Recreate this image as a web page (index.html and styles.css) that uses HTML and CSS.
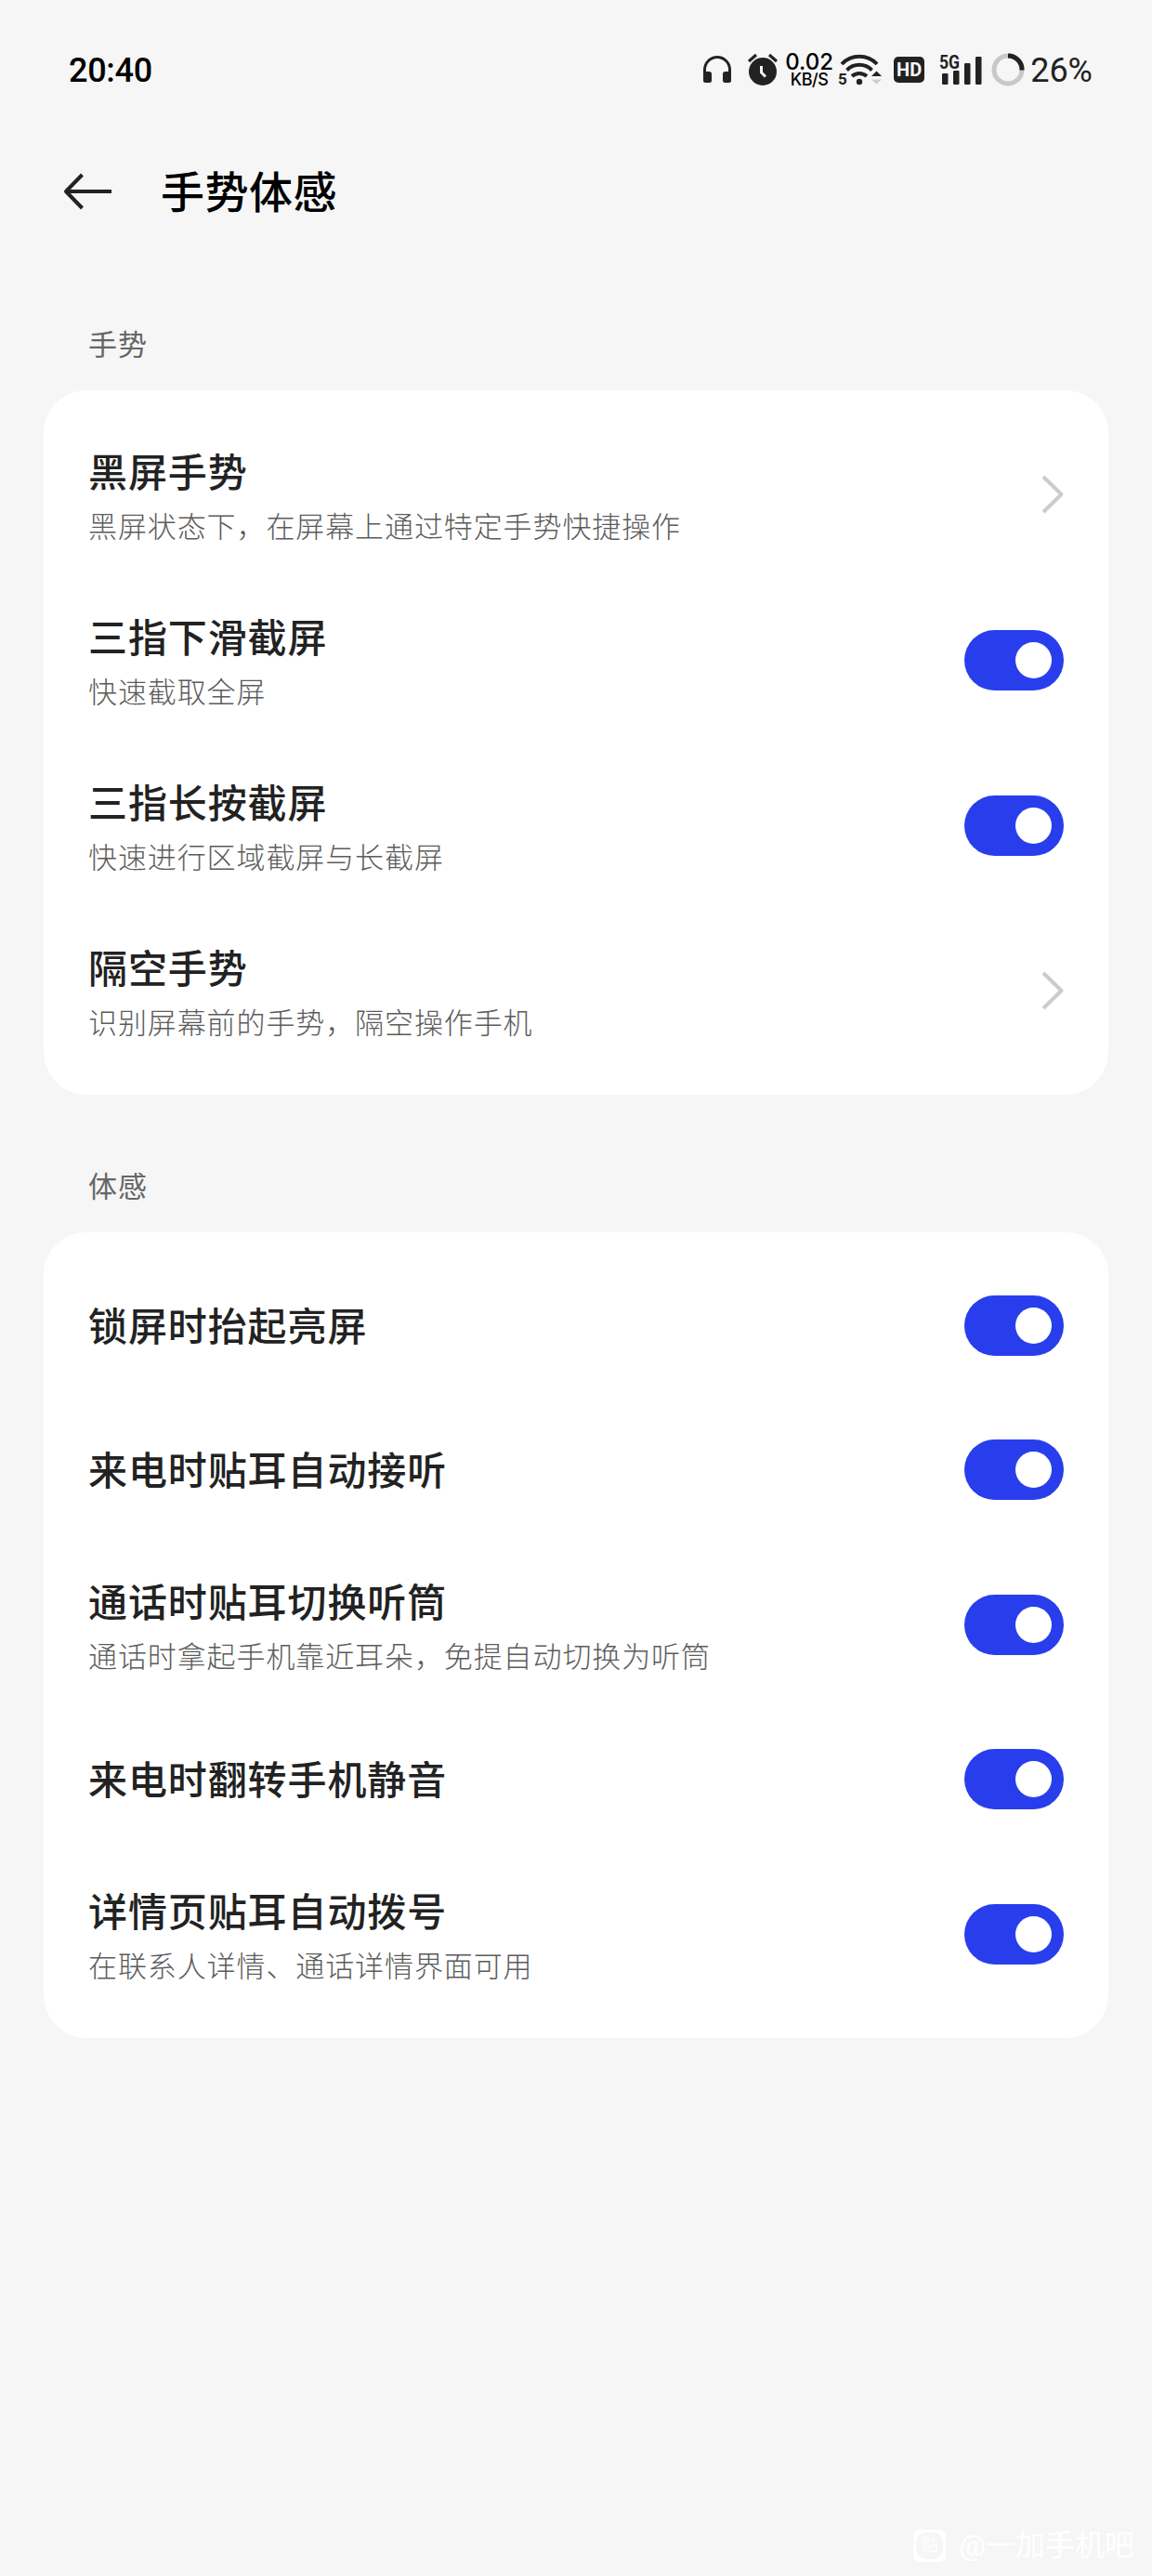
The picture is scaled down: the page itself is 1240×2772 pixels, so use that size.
FILE: index.html
```html
<!DOCTYPE html>
<html lang="zh-CN">
<head>
    <meta charset="UTF-8">
    <meta name="viewport" content="width=device-width, initial-scale=1.0">
    <title>手势体感</title>
    <link rel="stylesheet" href="styles.css">
</head>
<body>

    <!-- Status bar -->
    <div class="status-bar">
        <span class="time">20:40</span>
        <svg class="icon-headphones" width="32" height="30" viewBox="0 0 32 30">
            <path d="M2.5 21V15a13.5 13.5 0 0 1 27 0v6" fill="none" stroke="#222" stroke-width="3"/>
            <rect x="1" y="17" width="9" height="12" rx="2.5" fill="#222"/>
            <rect x="22" y="17" width="9" height="12" rx="2.5" fill="#222"/>
        </svg>
        <svg class="icon-alarm" width="34" height="36" viewBox="0 0 34 36">
            <circle cx="17" cy="20" r="15" fill="#222"/>
            <path d="M2 9l8-7M32 9l-8-7" stroke="#222" stroke-width="3.2"/>
            <path d="M15.500 14v7l4.500 4.500" fill="none" stroke="#f6f6f6" stroke-width="3"/>
        </svg>
        <div class="speed">
            <span class="speed-value">0.02</span>
            <span class="speed-unit">KB/S</span>
        </div>
        <svg class="icon-wifi" width="48" height="38" viewBox="0 0 48 38">
            <path d="M4 13a26 26 0 0 1 38 0M9.500 19.500a19 19 0 0 1 27 0M15 26a12 12 0 0 1 16 0" fill="none" stroke="#222" stroke-width="4"/>
            <circle cx="23" cy="32" r="3.200" fill="#222"/>
            <path d="M36 26l5.500-5.500 5.500 5.500z" fill="#222"/>
            <path d="M36 29.500h11l-5.500 5z" fill="#ccc"/>
            <text x="0" y="35" class="wifi-band">5</text>
        </svg>
        <span class="hd">HD</span>
        <svg class="icon-signal" width="46" height="34" viewBox="0 0 46 34">
            <rect x="3" y="21" width="6.500" height="12" rx="1.200" fill="#222"/>
            <rect x="15" y="18" width="6.500" height="15" rx="1.200" fill="#222"/>
            <rect x="27" y="10" width="6.500" height="23" rx="1.200" fill="#222"/>
            <rect x="39" y="3" width="6.500" height="30" rx="1.200" fill="#222"/>
            <text x="0" y="16" class="net-type" textLength="22" lengthAdjust="spacingAndGlyphs">5G</text>
        </svg>
        <svg class="icon-battery" width="36" height="36" viewBox="0 0 36 36">
            <circle cx="18" cy="18" r="15" fill="none" stroke="#c8c8c8" stroke-width="5"/>
            <path d="M18 3a15 15 0 0 1 15 15.500" fill="none" stroke="#222" stroke-width="5"/>
        </svg>
        <span class="percent">26%</span>
    </div>

    <!-- Page header -->
    <div class="header">
        <svg width="54" height="40" viewBox="0 0 54 40">
            <path d="M21.500 2L4 20l17.500 18M4 20h49" fill="none" stroke="#222" stroke-width="4" stroke-linejoin="round"/>
        </svg>
        <h1>手势体感</h1>
    </div>

    <!-- Gestures -->
    <h2>手势</h2>
    <ul class="card">
        <li>
            <div class="text">
                <p class="title">黑屏手势</p>
                <p class="desc">黑屏状态下，在屏幕上通过特定手势快捷操作</p>
            </div>
            <svg class="arrow" width="24" height="42" viewBox="0 0 24 42"><path d="M2 2l19.500 19L2 40"/></svg>
        </li>
        <li>
            <div class="text">
                <p class="title">三指下滑截屏</p>
                <p class="desc">快速截取全屏</p>
            </div>
            <span class="switch"></span>
        </li>
        <li>
            <div class="text">
                <p class="title">三指长按截屏</p>
                <p class="desc">快速进行区域截屏与长截屏</p>
            </div>
            <span class="switch"></span>
        </li>
        <li>
            <div class="text">
                <p class="title">隔空手势</p>
                <p class="desc">识别屏幕前的手势，隔空操作手机</p>
            </div>
            <svg class="arrow" width="24" height="42" viewBox="0 0 24 42"><path d="M2 2l19.500 19L2 40"/></svg>
        </li>
    </ul>

    <!-- Motion -->
    <h2>体感</h2>
    <ul class="card">
        <li class="single">
            <p class="title">锁屏时抬起亮屏</p>
            <span class="switch"></span>
        </li>
        <li class="single">
            <p class="title">来电时贴耳自动接听</p>
            <span class="switch"></span>
        </li>
        <li>
            <div class="text">
                <p class="title">通话时贴耳切换听筒</p>
                <p class="desc">通话时拿起手机靠近耳朵，免提自动切换为听筒</p>
            </div>
            <span class="switch"></span>
        </li>
        <li class="single">
            <p class="title">来电时翻转手机静音</p>
            <span class="switch"></span>
        </li>
        <li>
            <div class="text">
                <p class="title">详情页贴耳自动拨号</p>
                <p class="desc">在联系人详情、通话详情界面可用</p>
            </div>
            <span class="switch"></span>
        </li>
    </ul>

    <div class="watermark">
        <span class="logo"><span>贴</span></span>
        <span>@一加手机吧</span>
    </div>

</body>
</html>
```
FILE: styles.css
```css
* {
    box-sizing: border-box;
    margin: 0;
    padding: 0;
}

body {
    position: relative;
    height: 2772px;
    background-color: #f6f6f6;
    color: #222;
    font-family: Roboto, "Noto Sans CJK SC", sans-serif;
    overflow: hidden;
}

svg {
    overflow: visible;
}

/* Status bar */
.status-bar {
    display: flex;
    align-items: center;
    height: 150px;
    padding: 0 64px 0 74px;
    white-space: nowrap;
}

.time {
    margin-right: auto;
    padding-top: 2px;
    color: #000;
    font-size: 36px;
    font-weight: 500;
    letter-spacing: -0.3px;
}

.icon-headphones {
    margin-right: 16px;
}

.icon-alarm {
    margin-right: 7px;
}

.speed {
    width: 52px;
    margin-right: 5px;
    padding-top: 2px;
    color: #000;
    font-family: Inter, sans-serif;
    font-weight: 500;
    text-align: center;
}

.speed span {
    display: block;
}

.speed-value {
    font-size: 24px;
    line-height: 20px;
}

.speed-unit {
    font-size: 18px;
    letter-spacing: -0.4px;
    line-height: 18px;
}

.icon-wifi {
    margin-right: 12px;
}

.wifi-band {
    font: bold 17px Roboto, sans-serif;
    fill: #222;
}

.hd {
    width: 33px;
    height: 28px;
    margin-right: 16px;
    border-radius: 5px;
    background-color: #222;
    color: #f6f6f6;
    font-size: 20px;
    font-weight: bold;
    line-height: 28px;
    text-align: center;
}

.icon-signal {
    margin-right: 10px;
}

.net-type {
    font: bold 20px Roboto, sans-serif;
    fill: #222;
}

.icon-battery {
    margin-right: 6px;
}

.percent {
    padding-top: 2px;
    font-size: 36px;
}

/* Header */
.header {
    display: flex;
    align-items: center;
    gap: 52px;
    height: 112px;
    padding-left: 67px;
}

h1 {
    padding-top: 4px;
    color: #000;
    font-size: 47px;
    font-weight: 500;
    letter-spacing: 0.5px;
    line-height: 70px;
}

h2 {
    height: 46px;
    margin: 87px 95px 25px;
    color: #666;
    font-size: 31px;
    font-weight: 400;
    letter-spacing: 0.9px;
    line-height: 46px;
}

/* Cards */
.card {
    margin: 0 47px;
    padding: 23px 48px;
    border-radius: 46px;
    background-color: #fff;
    list-style: none;
}

.card + h2 {
    margin-top: 77px;
}

.card li {
    display: flex;
    align-items: center;
    justify-content: space-between;
    height: 178px;
}

.card .single {
    height: 155px;
}

.text {
    padding-top: 4px;
}

.title {
    font-size: 42px;
    font-weight: 500;
    letter-spacing: 0.9px;
    line-height: 60px;
}

.single .title {
    padding-top: 5px;
}

.desc {
    margin-top: 7px;
    color: #5c5c5c;
    font-size: 31px;
    font-weight: 300;
    letter-spacing: 0.9px;
    line-height: 42px;
}

.arrow path {
    fill: none;
    stroke: #ccc;
    stroke-width: 4;
    stroke-linejoin: round;
}

.switch {
    display: flex;
    align-items: center;
    justify-content: flex-end;
    width: 107px;
    height: 65px;
    padding-right: 13px;
    border-radius: 33px;
    background-color: #283eed;
}

.switch::before {
    content: "";
    width: 39px;
    height: 39px;
    border-radius: 50%;
    background-color: #fff;
}

/* Watermark */
.watermark {
    position: absolute;
    right: 19px;
    bottom: 11px;
    display: flex;
    align-items: center;
    gap: 14px;
    color: #fff;
    font-size: 32px;
    line-height: 44px;
}

.logo {
    width: 35px;
    height: 35px;
    padding: 3px;
    border-radius: 7px;
    background-color: #fff;
}

.logo span {
    display: block;
    height: 29px;
    border-radius: 12px;
    background-color: #f6f6f6;
    font-size: 18px;
    line-height: 28px;
    text-align: center;
}
```
